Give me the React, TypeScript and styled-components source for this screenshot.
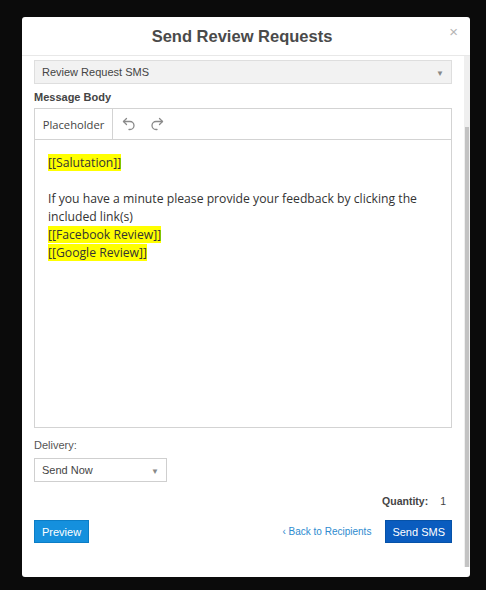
import React from "react";
import styled, { createGlobalStyle } from "styled-components";

const Global = createGlobalStyle`
  html, body { margin: 0; padding: 0; background: #0b0b0b; }
  body { font-family: "Liberation Sans", Arial, sans-serif; }
  * { box-sizing: border-box; }
`;

const Backdrop = styled.div`
  width: 486px;
  height: 590px;
  background: #0b0b0b;
  padding: 17px 0 0 22px;
`;

const Modal = styled.div`
  width: 448px;
  height: 560px;
  background: #fff;
  border-radius: 3px;
  display: flex;
  flex-direction: column;
  overflow: hidden;
`;

const Header = styled.div`
  height: 39px;
  border-bottom: 1px solid #e8e8e8;
  display: flex;
  align-items: center;
  justify-content: center;
  padding-right: 8px;
  position: relative;
`;

const Title = styled.h2`
  margin: 0;
  font-size: 16.5px;
  font-weight: bold;
  color: #4a4a4a;
`;

const Close = styled.span`
  position: absolute;
  right: 12px;
  top: 6px;
  font-size: 15px;
  color: #b5b5b5;
`;

const BodyRow = styled.div`
  flex: 1;
  display: flex;
  min-height: 0;
`;

const Content = styled.div`
  flex: 1;
  padding: 4px 12px 0 12px;
  display: flex;
  flex-direction: column;
`;

const Track = styled.div`
  width: 6px;
  height: 511px;
  background: #efefef;
  display: flex;
  flex-direction: column;
`;

const Thumb = styled.div`
  margin-top: 71px;
  flex: 1;
  margin-left: 1px;
  width: 4px;
  background: #c3c3c3;
`;

const Select = styled.div<{ $grey?: boolean; $width?: string }>`
  height: 24px;
  width: ${(p) => p.$width ?? "100%"};
  border: 1px solid ${(p) => (p.$grey ? "#dedede" : "#cfcfcf")};
  background: ${(p) => (p.$grey ? "#f2f2f2" : "#fff")};
  display: flex;
  align-items: center;
  justify-content: space-between;
  padding: 0 7px 0 7px;
  font-size: 11px;
  color: #444;
`;

const Caret = styled.span`
  font-size: 8px;
  color: #888;
  padding-top: 2px;
`;

const Label = styled.div<{ $bold?: boolean }>`
  font-size: 11px;
  font-weight: ${(p) => (p.$bold ? "bold" : "normal")};
  color: ${(p) => (p.$bold ? "#444" : "#555")};
  margin: ${(p) => (p.$bold ? "7px 0 4px" : "11px 0 6px")};
  line-height: 13px;
`;

const Editor = styled.div`
  height: 320px;
  border: 1px solid #d3d3d3;
  display: flex;
  flex-direction: column;
`;

const Toolbar = styled.div`
  height: 31px;
  border-bottom: 1px solid #d3d3d3;
  display: flex;
  align-items: stretch;
`;

const ToolButton = styled.div`
  width: 78px;
  border-right: 1px solid #d3d3d3;
  display: flex;
  align-items: center;
  justify-content: center;
  font-family: "Open Sans", "Noto Sans", sans-serif;
  font-size: 11.2px;
  color: #444;
`;

const IconButton = styled.div<{ $first?: boolean }>`
  width: 28px;
  display: flex;
  align-items: center;
  justify-content: center;
  margin-left: ${(p) => (p.$first ? "2px" : "0")};
`;

const Text = styled.div`
  padding: 14px 13px;
  font-family: "Open Sans", "Noto Sans", sans-serif;
  font-size: 12.2px;
  line-height: 18px;
  color: #333;
`;

const Mark = styled.span`
  background: #ffff00;
`;

const QtyRow = styled.div`
  display: flex;
  justify-content: flex-end;
  gap: 12px;
  margin-top: 13px;
  padding-right: 6px;
  font-size: 10.5px;
  color: #444;
  line-height: 13px;
`;

const Strong = styled.span`
  font-weight: bold;
`;

const Actions = styled.div`
  display: flex;
  align-items: center;
  margin-top: 12px;
`;

const Button = styled.button<{ $dark?: boolean }>`
  height: 23px;
  padding: 0 ${(p) => (p.$dark ? "6px" : "7px")};
  border: 1px solid ${(p) => (p.$dark ? "#0652a8" : "#0b7dc6")};
  background: ${(p) => (p.$dark ? "#0a5cbf" : "#1590dd")};
  color: #fff;
  font-family: "Liberation Sans", Arial, sans-serif;
  font-size: 11px;
  border-radius: 0;
`;

const Spacer = styled.div`
  flex: 1;
`;

const BackLink = styled.a`
  font-size: 10px;
  color: #2d8bcf;
  margin-right: 14px;
  text-decoration: none;
`;

const UndoIcon = ({ flip }: { flip?: boolean }) => (
  <svg
    width="16"
    height="16"
    viewBox="0 0 16 16"
    style={flip ? { transform: "scaleX(-1)" } : undefined}
    fill="none"
    stroke="#8a8a8a"
    strokeWidth="1.3"
    strokeLinecap="round"
    strokeLinejoin="round"
  >
    <path d="M5.5 2.5 2.5 5.5l3 3" />
    <path d="M2.5 5.5h6.5a4 4 0 0 1 0 8H8" />
  </svg>
);

export default function App() {
  return (
    <>
      <Global />
      <Backdrop>
        <Modal>
          <Header>
            <Title>Send Review Requests</Title>
            <Close>×</Close>
          </Header>
          <BodyRow>
            <Content>
              <Select $grey>
                <span>Review Request SMS</span>
                <Caret>▼</Caret>
              </Select>
              <Label $bold>Message Body</Label>
              <Editor>
                <Toolbar>
                  <ToolButton>Placeholder</ToolButton>
                  <IconButton $first>
                    <UndoIcon />
                  </IconButton>
                  <IconButton>
                    <UndoIcon flip />
                  </IconButton>
                </Toolbar>
                <Text>
                  <Mark>[[Salutation]]</Mark>
                  <br />
                  <br />
                  If you have a minute please provide your feedback by clicking the
                  included link(s)
                  <br />
                  <Mark>[[Facebook Review]]</Mark>
                  <br />
                  <Mark>[[Google Review]]</Mark>
                </Text>
              </Editor>
              <Label>Delivery:</Label>
              <Select $width="133px">
                <span>Send Now</span>
                <Caret>▼</Caret>
              </Select>
              <QtyRow>
                <Strong>Quantity:</Strong>
                <span>1</span>
              </QtyRow>
              <Actions>
                <Button>Preview</Button>
                <Spacer />
                <BackLink href="#">‹ Back to Recipients</BackLink>
                <Button $dark>Send SMS</Button>
              </Actions>
            </Content>
            <Track>
              <Thumb />
            </Track>
          </BodyRow>
        </Modal>
      </Backdrop>
    </>
  );
}
